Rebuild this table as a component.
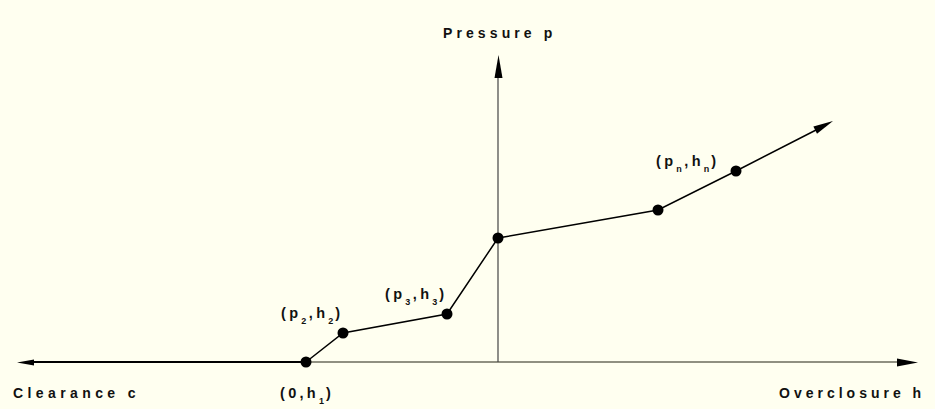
import React from 'react';

// ─── Data ─────────────────────────────────────────────────────────────────────

const curve: [number, number][] = [
  [306, 362],
  [343, 333],
  [447, 314],
  [498, 238],
  [658, 210],
  [736, 171],
];

interface LabelProps {
  x: number;
  y: number;
  a: string;
  b: string;
  sa?: string;
  sb: string;
}

// (a_sa, b_sb) style label with subscripts
function PairLabel({ x, y, a, b, sa, sb }: LabelProps) {
  return (
    <text x={x} y={y} fontSize={14.5} letterSpacing={3.3} fill="#111">
      (
      {a}
      {sa && (
        <tspan fontSize={9} dy={6} letterSpacing={2.5}>
          {sa}
        </tspan>
      )}
      <tspan dy={sa ? -6 : 0}>,{b}</tspan>
      <tspan fontSize={9} dy={6} letterSpacing={2}>
        {sb}
      </tspan>
      <tspan dy={-6}>)</tspan>
    </text>
  );
}

// ─── Component ────────────────────────────────────────────────────────────────

export default function App() {
  const pts = curve.map(([x, y]) => `${x},${y}`).join(' ');

  return (
    <div className="w-[935px] h-[409px] bg-[#fffff0] overflow-hidden">
      <svg
        width={935}
        height={409}
        viewBox="0 0 935 409"
        className="block font-['Liberation_Sans',Arial,sans-serif] font-bold"
      >
        {/* Axes */}
        <line x1={30} y1={362} x2={306} y2={362} stroke="#000" strokeWidth={2} />
        <line x1={306} y1={362} x2={900} y2={362} stroke="#6b6b5c" strokeWidth={1.5} />
        <line x1={498} y1={362} x2={498} y2={72} stroke="#444" strokeWidth={1.2} />

        {/* Arrowheads */}
        <polygon points="17,362.5 34,359.5 34,365.5" fill="#000" />
        <polygon points="918,362.5 897,358.5 897,366.5" fill="#000" />
        <polygon points="498.5,55 494.5,78 502.5,78" fill="#000" />
        <polygon points="833,121 817,133.8 813.4,126.6" fill="#000" />

        {/* Pressure-overclosure curve */}
        <polyline points={`${pts} 818,129`} fill="none" stroke="#000" strokeWidth={1.5} />
        {curve.map(([x, y]) => (
          <circle key={`${x}-${y}`} cx={x} cy={y} r={5.5} fill="#000" />
        ))}

        {/* Axis labels */}
        <text x={443} y={38} fontSize={14} letterSpacing={4.1} fill="#111">
          Pressure p
        </text>
        <text x={13} y={398} fontSize={14} letterSpacing={4.4} fill="#111">
          Clearance c
        </text>
        <text x={779} y={398} fontSize={14} letterSpacing={4.0} fill="#111">
          Overclosure h
        </text>

        {/* Point labels */}
        <PairLabel x={280} y={398} a="0" b="h" sb="1" />
        <PairLabel x={281} y={318} a="p" b="h" sa="2" sb="2" />
        <PairLabel x={385} y={299} a="p" b="h" sa="3" sb="3" />
        <PairLabel x={656} y={166} a="p" b="h" sa="n" sb="n" />
      </svg>
    </div>
  );
}
